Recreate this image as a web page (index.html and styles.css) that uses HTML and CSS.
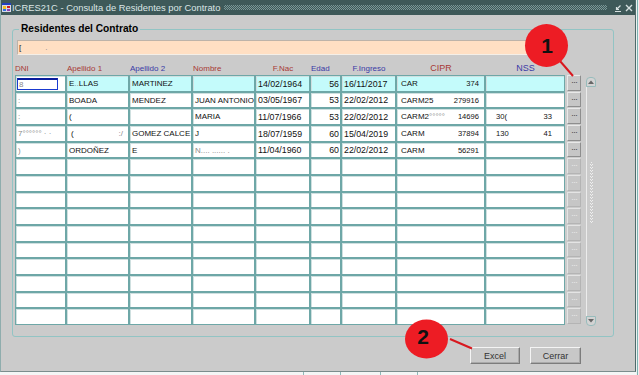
FILE: index.html
```html
<!DOCTYPE html>
<html lang="es">
<head>
<meta charset="utf-8">
<title>ICRES21C</title>
<link rel="stylesheet" href="styles.css">
</head>
<body>
<div class="screen">
  <div class="window">
    <div class="titlebar">
      <svg class="app-icon" width="9" height="9" viewBox="0 0 9 9">
        <rect x="0" y="0" width="9" height="9" fill="#d8d8e8"/>
        <rect x="0" y="0" width="9" height="2" fill="#2040c0"/>
        <rect x="1" y="3" width="3" height="3" fill="#f0c020"/>
        <rect x="5" y="3" width="3" height="2" fill="#d02020"/>
        <rect x="1" y="6" width="3" height="2" fill="#3070e0"/>
        <rect x="5" y="6" width="3" height="2" fill="#9040b0"/>
      </svg>
      <span class="title">ICRES21C - Consulta de Residentes por Contrato</span>
      <span class="pattern"></span>
      <svg class="ctrl" width="8" height="8" viewBox="0 0 8 8">
        <path d="M6.5 1.5 L2.5 5.5 M2.5 3 V5.5 H5" stroke="#d6e0e0" stroke-width="1.2" fill="none"/>
        <path d="M1 7.5 H7" stroke="#d6e0e0" stroke-width="1"/>
      </svg>
      <svg class="ctrl" width="8" height="8" viewBox="0 0 8 8">
        <path d="M1 1 L7 7 M7 1 L1 7" stroke="#d6e0e0" stroke-width="1.4"/>
      </svg>
    </div>
    <div class="body">
      <fieldset class="group">
        <legend>Residentes del Contrato</legend>
        <div class="filter">[<span class="fz dot">.</span></div>
        <div class="header">
          <span class="h red">DNI</span>
          <span class="h red">Apellido 1</span>
          <span class="h blue">Apellido 2</span>
          <span class="h red">Nombre</span>
          <span class="h red center">F.Nac</span>
          <span class="h blue">Edad</span>
          <span class="h blue center">F.Ingreso</span>
          <span class="h red center big">CIPR</span>
          <span class="h blue center big">NSS</span>
          <span></span>
        </div>
        <div class="tablewrap">
          <div class="table">
            <div class="row sel">
              <div class="c focuscell"><span class="focus"><span class="fz">8</span></span></div>
              <div class="c">E<span class="fz">..</span>LLAS</div>
              <div class="c">MARTINEZ</div>
              <div class="c"></div>
              <div class="c num">14/02/1964</div>
              <div class="c num right">56</div>
              <div class="c num">16/11/2017</div>
              <div class="c split"><span>CAR</span><span class="small">374</span></div>
              <div class="c"></div>
              <div class="more">&middot;&middot;&middot;</div>
            </div>
            <div class="row">
              <div class="c"><span class="fz">:</span></div>
              <div class="c">BOADA</div>
              <div class="c">MENDEZ</div>
              <div class="c">JUAN ANTONIO</div>
              <div class="c num">03/05/1967</div>
              <div class="c num right">53</div>
              <div class="c num">22/02/2012</div>
              <div class="c split"><span>CARM25</span><span class="small">279916</span></div>
              <div class="c"></div>
              <div class="more">&middot;&middot;&middot;</div>
            </div>
            <div class="row">
              <div class="c"><span class="fz">:</span></div>
              <div class="c">(</div>
              <div class="c"></div>
              <div class="c">MARIA</div>
              <div class="c num">11/07/1966</div>
              <div class="c num right">53</div>
              <div class="c num">22/02/2012</div>
              <div class="c split"><span>CARM2<span class="fz">&deg;&deg;&deg;&deg;&deg;</span></span><span class="small">14696</span></div>
              <div class="c split nss"><span class="small">30(</span><span class="small">33</span></div>
              <div class="more">&middot;&middot;&middot;</div>
            </div>
            <div class="row">
              <div class="c"><span class="fz">7&deg;&deg;&deg;&deg;&deg;&deg; &middot; &middot;</span></div>
              <div class="c split"><span>(</span><span class="fz">:/</span></div>
              <div class="c">GOMEZ CALCE</div>
              <div class="c">J</div>
              <div class="c num">18/07/1959</div>
              <div class="c num right">60</div>
              <div class="c num">15/04/2019</div>
              <div class="c split"><span>CARM</span><span class="small">37894</span></div>
              <div class="c split nss"><span class="small">130</span><span class="small">41</span></div>
              <div class="more">&middot;&middot;&middot;</div>
            </div>
            <div class="row">
              <div class="c"><span class="fz">)</span></div>
              <div class="c">ORDOÑEZ</div>
              <div class="c">E</div>
              <div class="c"><span class="fz">N.... ...... .</span></div>
              <div class="c num">11/04/1960</div>
              <div class="c num right">60</div>
              <div class="c num">22/02/2012</div>
              <div class="c split"><span>CARM</span><span class="small">56291</span></div>
              <div class="c"></div>
              <div class="more">&middot;&middot;&middot;</div>
            </div>
            <div class="row empty"><div class="c"></div><div class="c"></div><div class="c"></div><div class="c"></div><div class="c"></div><div class="c"></div><div class="c"></div><div class="c"></div><div class="c"></div><div class="more">&middot;&middot;&middot;</div></div>
            <div class="row empty"><div class="c"></div><div class="c"></div><div class="c"></div><div class="c"></div><div class="c"></div><div class="c"></div><div class="c"></div><div class="c"></div><div class="c"></div><div class="more">&middot;&middot;&middot;</div></div>
            <div class="row empty"><div class="c"></div><div class="c"></div><div class="c"></div><div class="c"></div><div class="c"></div><div class="c"></div><div class="c"></div><div class="c"></div><div class="c"></div><div class="more">&middot;&middot;&middot;</div></div>
            <div class="row empty"><div class="c"></div><div class="c"></div><div class="c"></div><div class="c"></div><div class="c"></div><div class="c"></div><div class="c"></div><div class="c"></div><div class="c"></div><div class="more">&middot;&middot;&middot;</div></div>
            <div class="row empty"><div class="c"></div><div class="c"></div><div class="c"></div><div class="c"></div><div class="c"></div><div class="c"></div><div class="c"></div><div class="c"></div><div class="c"></div><div class="more">&middot;&middot;&middot;</div></div>
            <div class="row empty"><div class="c"></div><div class="c"></div><div class="c"></div><div class="c"></div><div class="c"></div><div class="c"></div><div class="c"></div><div class="c"></div><div class="c"></div><div class="more">&middot;&middot;&middot;</div></div>
            <div class="row empty"><div class="c"></div><div class="c"></div><div class="c"></div><div class="c"></div><div class="c"></div><div class="c"></div><div class="c"></div><div class="c"></div><div class="c"></div><div class="more">&middot;&middot;&middot;</div></div>
            <div class="row empty"><div class="c"></div><div class="c"></div><div class="c"></div><div class="c"></div><div class="c"></div><div class="c"></div><div class="c"></div><div class="c"></div><div class="c"></div><div class="more">&middot;&middot;&middot;</div></div>
            <div class="row empty"><div class="c"></div><div class="c"></div><div class="c"></div><div class="c"></div><div class="c"></div><div class="c"></div><div class="c"></div><div class="c"></div><div class="c"></div><div class="more">&middot;&middot;&middot;</div></div>
            <div class="row empty"><div class="c"></div><div class="c"></div><div class="c"></div><div class="c"></div><div class="c"></div><div class="c"></div><div class="c"></div><div class="c"></div><div class="c"></div><div class="more">&middot;&middot;&middot;</div></div>
          </div>
          <div class="scroll">
            <div class="arrow up"><svg width="6" height="4" viewBox="0 0 6 4"><path d="M0 4 L3 0.5 L6 4 Z" fill="#666"/></svg></div>
            <div class="track"><div class="grip"></div></div>
            <div class="arrow down"><svg width="6" height="4" viewBox="0 0 6 4"><path d="M0 0 L3 3.5 L6 0 Z" fill="#666"/></svg></div>
          </div>
        </div>
      </fieldset>
      <div class="actions">
        <button class="btn">Excel</button>
        <button class="btn wide">Cerrar</button>
      </div>
    </div>
  </div>
  <div class="under"></div>
  <svg class="annot" width="639" height="375" viewBox="0 0 639 375">
    <line x1="560" y1="61" x2="573" y2="76" stroke="#d8181f" stroke-width="2"/>
    <circle cx="546.5" cy="45.5" r="21.5" fill="#ed1c24"/>
    <text class="annot-num" x="547" y="53">1</text>
    <line x1="450" y1="339" x2="472" y2="348.5" stroke="#d8181f" stroke-width="2"/>
    <ellipse cx="426.5" cy="339" rx="21.5" ry="19.5" fill="#ed1c24"/>
    <text class="annot-num" x="423" y="343.5">2</text>
  </svg>
</div>
</body>
</html>
```
FILE: styles.css
```css
* { box-sizing: border-box; margin: 0; padding: 0; }

body {
  margin: 0;
  width: 639px;
  height: 375px;
  overflow: hidden;
  font-family: "Liberation Sans", Arial, sans-serif;
  background: #eef1f1;
}

.screen {
  position: relative;
  width: 639px;
  height: 375px;
  background:
    linear-gradient(to right, transparent 637px, #7fb2b2 637px, #7fb2b2 638px, transparent 638px),
    #eef1f1;
}

.window {
  width: 636px;
  height: 372px;
  display: flex;
  flex-direction: column;
  background: #cbcbcb;
  border-left: 1px solid #8fadad;
  border-right: 1px solid #4f6a6a;
  border-bottom: 1px solid #7b8d8d;
}

.titlebar {
  height: 15px;
  flex: none;
  display: flex;
  align-items: center;
  background: #3e5959;
  color: #dce6e6;
  font-size: 9.4px;
  padding: 0 2px 0 1px;
}

.app-icon { flex: none; margin-right: 1px; }
.title { white-space: nowrap; }

.pattern {
  flex: 1;
  height: 5px;
  margin: 0 4px 0 4px;
  background: repeating-conic-gradient(#7a9797 0 25%, transparent 0 50%) 0 0 / 2px 2px;
}

.ctrl { flex: none; margin-left: 3px; }

.body {
  flex: 1;
  padding: 8px 0 0 11px;
  display: flex;
  flex-direction: column;
}

.group {
  width: 602px;
  border: 1px solid #92c4c4;
  border-radius: 3px;
  padding: 0 0 9px 0;
}

.group legend {
  margin-left: 6px;
  padding: 0 2px;
  font-size: 10.2px;
  line-height: 12px;
  font-weight: bold;
  color: #000;
}

.filter {
  margin: 5px 0 0 4px;
  width: 548px;
  height: 15px;
  background: #ffdfc3;
  border: 1px solid;
  border-color: #bdb3a9 #f4efe8 #f4efe8 #bdb3a9;
  font-size: 8px;
  line-height: 13px;
  padding-left: 1px;
  color: #222;
}
.filter .dot { margin-left: 24px; }

.header, .row {
  display: grid;
  grid-template-columns: 51px 63px 63px 63px 55px 31px 55px 89px 80px 16px;
}

.header {
  margin: 7px 0 0 2px;
  height: 13px;
  font-size: 8px;
  line-height: 13px;
}
.h { white-space: nowrap; padding-left: 1px; }
.h:first-child { padding-left: 0; }
.red { color: #a83a36; }
.blue { color: #3a3aa6; }
.center { text-align: center; }
.big { font-size: 9px; }

.tablewrap {
  display: flex;
  margin-left: 2px;
  height: 252px;
}

.table { display: flex; flex-direction: column; }

.row { height: 17px; }
.row:nth-child(3n+2) { height: 16px; }

.c {
  border: 1px solid #6ea7a7;
  background: #fff;
  box-shadow: inset 1px 1px 0 #cfe0e0;
  font-size: 8px;
  color: #111;
  padding: 0 2px;
  display: flex;
  align-items: center;
  white-space: nowrap;
  overflow: hidden;
}

.sel .c { background: #c4fbfb; }
.sel .c.focuscell { background: #fff; padding: 1px 0 1px 1px; }

.focus {
  display: flex;
  align-items: center;
  width: 41px;
  height: 12px;
  border: 1px solid #1a3ad0;
  border-top: 2px solid #0a1c9c;
  padding-left: 1px;
}

.num { font-size: 8.8px; }
.right { justify-content: flex-end; padding-right: 1px; }
.split { justify-content: space-between; padding: 0 5px 0 4px; }
.split.nss { padding: 0 12px 0 10px; }
.small { font-size: 7.6px; }
.fz { color: #8a8a8a; }

.more {
  margin: 0 0 1px 2px;
  width: 14px;
  background: #c6c6c6;
  border: 1px solid;
  border-color: #e9e9e9 #8e8e8e #8e8e8e #e9e9e9;
  font-size: 9px;
  line-height: 12px;
  color: #4a4a4a;
  text-align: center;
  letter-spacing: -1px;
}
.empty .more {
  border-color: #e4e4e4 #b4b4b4 #b4b4b4 #e4e4e4;
  color: #e8e8e8;
}

.scroll {
  margin-left: 5px;
  width: 10px;
  display: flex;
  flex-direction: column;
  padding: 2px 0 1px;
}

.arrow {
  flex: none;
  height: 10px;
  width: 10px;
  background: #d3d3d3;
  border: 1px solid #98bcbc;
  display: flex;
  align-items: center;
  justify-content: center;
}
.arrow.up { border-radius: 4px 4px 0 0; }
.arrow.down { border-radius: 0 0 4px 4px; }

.track {
  flex: 1;
  border-left: 1px solid #ececec;
  padding-top: 75px;
}

.grip {
  margin-left: 3px;
  width: 3px;
  height: 62px;
  background: repeating-conic-gradient(#efefef 0 25%, transparent 0 50%) 0 0 / 2px 3px;
}

.actions {
  display: flex;
  justify-content: flex-end;
  gap: 10px;
  margin-top: 10px;
  padding-right: 54px;
}

.btn {
  width: 50px;
  height: 17px;
  font-family: "Liberation Sans", Arial, sans-serif;
  font-size: 9px;
  color: #333;
  background: #c8c8c8;
  border: 1px solid;
  border-color: #f4f4f4 #7c7c7c #7c7c7c #f4f4f4;
  box-shadow: inset -1px -1px 0 #a9a9a9;
}
.btn.wide { width: 51px; }

.under {
  height: 3px;
  width: 636px;
  background:
    linear-gradient(to right, transparent 303px, #8fb8b8 303px, #8fb8b8 304px, transparent 304px),
    linear-gradient(to right, transparent 340px, #8fb8b8 340px, #8fb8b8 341px, transparent 341px),
    linear-gradient(to right, transparent 380px, #8fb8b8 380px, #8fb8b8 381px, transparent 381px),
    linear-gradient(to right, transparent 417px, #8fb8b8 417px, #8fb8b8 418px, transparent 418px),
    #f4f6f6;
}

.annot {
  position: absolute;
  left: 0;
  top: 0;
  pointer-events: none;
}

.annot-num {
  font-family: "Liberation Sans", Arial, sans-serif;
  font-size: 21px;
  font-weight: bold;
  fill: #111;
  text-anchor: middle;
}
```
